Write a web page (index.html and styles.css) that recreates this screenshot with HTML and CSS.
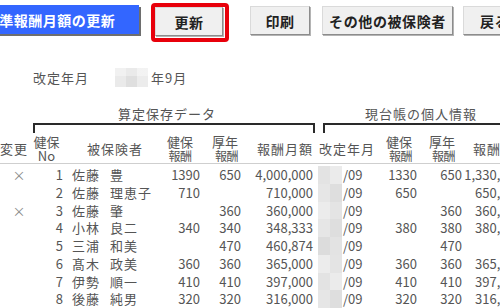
FILE: index.html
```html
<!DOCTYPE html>
<html lang="ja">
<head>
  <meta charset="UTF-8" />
  <meta name="viewport" content="width=device-width, initial-scale=1.0"/>
  <title>標準報酬月額の更新</title>
  <link rel="stylesheet" href="styles.css">
</head>
<body>
  <div class="toolbar">
    <div class="title-btn">標準報酬月額の更新</div>
    <span class="highlight"><button class="btn btn-update">更新</button></span>
    <button class="btn btn-print">印刷</button>
    <button class="btn btn-other">その他の被保険者</button>
    <button class="btn btn-back">戻る</button>
  </div>

  <div class="period">
    <span class="period-label">改定年月</span>
    <span class="period-blur"></span>
    <span>年9月</span>
  </div>

  <div class="groups">
    <div class="group group-saved">
      <div class="group-label">算定保存データ</div>
      <div class="bracket"></div>
    </div>
    <div class="group group-current">
      <div class="group-label">現台帳の個人情報</div>
      <div class="bracket"></div>
    </div>
  </div>

  <div class="grid head">
    <div class="h-change">変更</div>
    <div class="h-no">健保<br>No</div>
    <div class="h-name">被保険者</div>
    <div class="h-kenpo">健保<br><span class="small">報酬</span></div>
    <div class="h-kounen">厚年<br><span class="small">報酬</span></div>
    <div class="h-monthly">報酬月額</div>
    <div class="h-date">改定年月</div>
    <div class="h-kenpo2">健保<br><span class="small">報酬</span></div>
    <div class="h-kounen2">厚年<br><span class="small">報酬</span></div>
    <div class="h-hou">報酬月額</div>
  </div>

  <div class="rows" id="rows"></div>

  <script>
    const data = [
      ['×', 1, '佐藤', '豊', '1390', '650', '4,000,000', '1330', '650', '1,330,000'],
      ['', 2, '佐藤', '理恵子', '710', '', '710,000', '650', '', '650,000'],
      ['×', 3, '佐藤', '肇', '', '360', '360,000', '', '360', '360,000'],
      ['', 4, '小林', '良二', '340', '340', '348,333', '380', '380', '380,000'],
      ['', 5, '三浦', '和美', '', '470', '460,874', '', '470', ''],
      ['', 6, '髙木', '政美', '360', '360', '365,000', '360', '360', '365,000'],
      ['', 7, '伊勢', '順一', '410', '410', '397,000', '410', '410', '397,000'],
      ['', 8, '後藤', '純男', '320', '320', '316,000', '320', '320', '316,000']
    ];

    const container = document.getElementById('rows');
    data.forEach(r => {
      const div = document.createElement('div');
      div.className = 'grid row';
      div.innerHTML = `
        <div class="c-change">${r[0]}</div>
        <div class="num">${r[1]}</div>
        <div class="c-name"><span class="family">${r[2]}</span>${r[3]}</div>
        <div class="num">${r[4]}</div>
        <div class="num">${r[5]}</div>
        <div class="num">${r[6]}</div>
        <div class="c-date"><span class="blur"></span>/09</div>
        <div class="num">${r[7]}</div>
        <div class="num">${r[8]}</div>
        <div class="num">${r[9]}</div>
      `;
      container.appendChild(div);
    });
  </script>
</body>
</html>
```

FILE: styles.css
```css
html, body {
  margin: 0;
  overflow: hidden;
}
body {
  width: 500px;
  height: 308px;
  font-family: "Noto Sans CJK JP", sans-serif;
  font-size: 13px;
  color: #555;
  background: #fff;
}

/* toolbar */
.toolbar {
  display: flex;
  align-items: flex-start;
  height: 42px;
  padding-top: 3px;
  box-sizing: border-box;
  white-space: nowrap;
}
.title-btn {
  flex: none;
  margin-left: -39px;
  margin-top: 2px;
  width: 178px;
  height: 29px;
  display: flex;
  align-items: center;
  justify-content: center;
  background: #3366ff;
  color: #fff;
  font-size: 14px;
  font-weight: bold;
  letter-spacing: 0.5px;
  box-shadow: 2px 2px 0 #6e6e6e;
}
.btn {
  flex: none;
  height: 29px;
  margin-top: 3px;
  padding: 0;
  font-family: inherit;
  font-size: 14px;
  font-weight: bold;
  letter-spacing: 0.6px;
  color: #222;
  background: #f0f0f0;
  border: 1px solid #dadada;
  border-right-color: #8c8c8c;
  border-bottom-color: #8c8c8c;
  box-shadow: 1px 1px 0 #b4b4b4;
}
.highlight {
  flex: none;
  display: flex;
  margin-left: 12px;
  padding: 0 2px 2px 0;
  border: 4px solid #e8000b;
  border-radius: 4px;
}
.highlight .btn {
  margin-top: 0;
}
.btn-update {
  width: 68px;
}
.btn-print {
  width: 60px;
  margin-left: 21px;
}
.btn-other {
  width: 131px;
  margin-left: 12px;
}
.btn-back {
  width: 80px;
  margin-left: 10px;
  text-align: left;
  padding-left: 16px;
}

/* period */
.period {
  display: flex;
  align-items: center;
  height: 19px;
  line-height: 19px;
  margin-top: 26px;
  padding-left: 33px;
  letter-spacing: 1px;
}
.period-label {
  width: 82px;
}
.period-blur {
  width: 33px;
  height: 19px;
  margin-right: 3px;
  background:
    linear-gradient(180deg, rgba(255,255,255,0.35) 40%, rgba(255,255,255,0) 40%),
    linear-gradient(90deg, #eaeaea 33%, #dfdfdf 33%, #dfdfdf 66%, #ececec 66%);
}

/* groups */
.groups {
  display: flex;
  margin-top: 19px;
  padding-left: 33px;
  letter-spacing: 1px;
  white-space: nowrap;
}
.group {
  flex: none;
}
.group-label {
  height: 17px;
  line-height: 16px;
}
.group-saved {
  width: 282px;
}
.group-saved .group-label {
  padding-left: 85px;
}
.group-current {
  width: 220px;
  margin-left: 8px;
}
.group-current .group-label {
  padding-left: 42px;
}
.bracket {
  height: 10px;
  border: 2px solid #2a2a2a;
  border-bottom: none;
  box-sizing: border-box;
}
.group-current .bracket {
  border-right: none;
}

/* table */
.grid {
  display: grid;
  grid-template-columns: 33px 30px 97px 40px 41px 72px 62px 42px 45px 60px;
  width: 522px;
}
.head {
  height: 28px;
  margin-top: 2px;
  line-height: 14px;
  border-bottom: 1px solid #cfcfcf;
  align-items: center;
  white-space: nowrap;
}
.head .small {
  font-size: 12px;
  letter-spacing: -0.5px;
}
.h-change {
  letter-spacing: 1px;
}
.h-no {
  text-align: center;
  padding-right: 3px;
}
.h-name {
  padding-left: 24px;
  letter-spacing: 1px;
}
.h-kenpo {
  text-align: center;
}
.h-kounen {
  text-align: right;
  padding-right: 3px;
}
.h-monthly {
  text-align: right;
  letter-spacing: 1px;
}
.h-date {
  padding-left: 6px;
  letter-spacing: 1px;
}
.h-kenpo2 {
  text-align: right;
  padding-right: 5px;
}
.h-kounen2 {
  text-align: right;
  padding-right: 7px;
}
.h-hou {
  padding-left: 11px;
  letter-spacing: 1px;
}

.rows {
  padding-top: 2px;
}
.row {
  height: 17.75px;
  line-height: 17.75px;
  white-space: nowrap;
}
.num {
  text-align: right;
}
.c-change {
  text-align: center;
  padding-left: 5px;
  color: #8a8a8a;
}
.c-name {
  padding-left: 9px;
  letter-spacing: 1px;
}
.family {
  display: inline-block;
  width: 38px;
}
.c-date {
  display: flex;
  align-items: stretch;
}
.blur {
  width: 24px;
  margin: 0 1px 0 5px;
  background: linear-gradient(90deg, #e3e3e3 50%, #ebebeb 50%);
}
.row:nth-child(2n) .blur {
  background: linear-gradient(90deg, #e6e6e6 50%, #dedede 50%);
}
.row:nth-child(3n) .blur {
  background: linear-gradient(90deg, #ececec 50%, #e4e4e4 50%);
}
.row:nth-child(5) .blur {
  background: linear-gradient(90deg, #dcdcdc 50%, #e3e3e3 50%);
}
```
